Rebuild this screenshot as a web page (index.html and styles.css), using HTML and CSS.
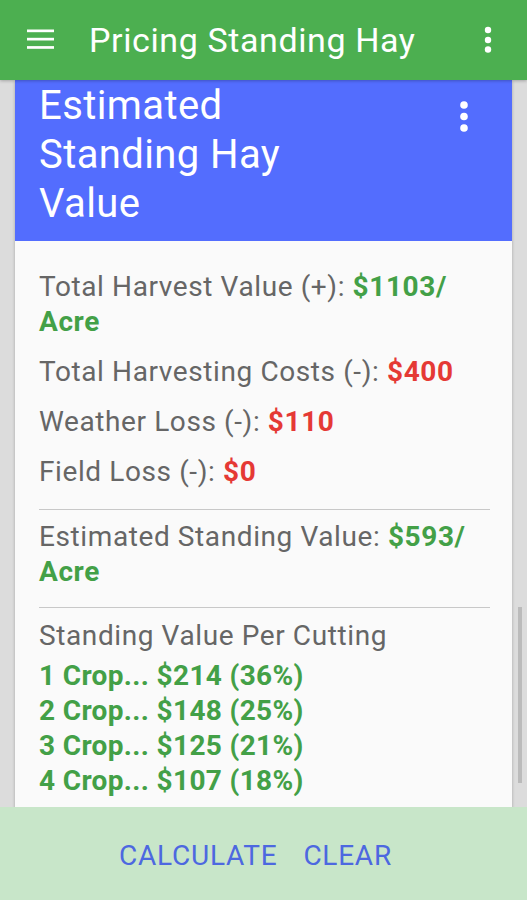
FILE: index.html
```html
<!DOCTYPE html>
<html>
<head>
    <title>Pricing Standing Hay</title>
    <link rel="stylesheet" href="styles.css">
</head>
<body>
    <div class="app">
        <div class="toolbar">
            <svg class="menu-icon" width="28" height="20" viewBox="0 0 28 20">
                <rect x="0" y="0.5" width="27" height="2.7" fill="#fff"/>
                <rect x="0" y="8.8" width="27" height="2.7" fill="#fff"/>
                <rect x="0" y="17.1" width="27" height="2.7" fill="#fff"/>
            </svg>
            <span class="toolbar-title">Pricing Standing Hay</span>
            <svg class="overflow-icon" width="12" height="30" viewBox="0 0 12 30">
                <circle cx="6" cy="5" r="3.2" fill="#fff"/>
                <circle cx="6" cy="15" r="3.2" fill="#fff"/>
                <circle cx="6" cy="24.5" r="3.2" fill="#fff"/>
            </svg>
        </div>

        <div class="content">
            <div class="card">
                <div class="card-header">
                    <h2 class="card-title">Estimated Standing Hay Value</h2>
                    <svg class="card-menu" width="14" height="34" viewBox="0 0 14 34">
                        <circle cx="7" cy="5" r="3.8" fill="#fff"/>
                        <circle cx="7" cy="16.5" r="3.8" fill="#fff"/>
                        <circle cx="7" cy="28" r="3.8" fill="#fff"/>
                    </svg>
                </div>
                <div class="card-body">
                    <div class="section first">
                        <p class="row">Total Harvest Value (+): <b class="plus">$1103/<br>Acre</b></p>
                        <p class="row">Total Harvesting Costs (-): <b class="minus">$400</b></p>
                        <p class="row">Weather Loss (-): <b class="minus">$110</b></p>
                        <p class="row">Field Loss (-): <b class="minus">$0</b></p>
                    </div>
                    <hr class="divider">
                    <div class="section second">
                        <p class="row">Estimated Standing Value: <b class="plus">$593/<br>Acre</b></p>
                    </div>
                    <hr class="divider">
                    <div class="section third">
                        <p class="row">Standing Value Per Cutting</p>
                        <ul class="cuttings">
                            <li>1 Crop... $214 (36%)</li>
                            <li>2 Crop... $148 (25%)</li>
                            <li>3 Crop... $125 (21%)</li>
                            <li>4 Crop... $107 (18%)</li>
                        </ul>
                    </div>
                </div>
            </div>
            <div class="scroll-thumb"></div>
        </div>

        <div class="actions">
            <button class="action">CALCULATE</button>
            <button class="action">CLEAR</button>
        </div>
    </div>
</body>
</html>
```

FILE: styles.css
```css
body {
    margin: 0;
    font-family: Roboto, "Noto Sans", sans-serif;
    background-color: #dcdcdc;
}

.app {
    width: 527px;
    height: 900px;
    display: flex;
    flex-direction: column;
    overflow: hidden;
}

/* Toolbar */
.toolbar {
    height: 80px;
    flex: none;
    background-color: #4caf50;
    display: flex;
    align-items: center;
    color: #fff;
    box-shadow: 0 1px 3px rgba(0, 0, 0, 0.25);
    position: relative;
    z-index: 2;
}

.menu-icon {
    margin-left: 27px;
    margin-bottom: 2px;
}

.toolbar-title {
    margin-left: 34px;
    font-size: 34px;
    letter-spacing: 0.6px;
    flex: 1;
}

.overflow-icon {
    margin-right: 33px;
}

/* Content */
.content {
    flex: 1;
    position: relative;
    overflow: hidden;
}

.card {
    margin: 0 15px 0 15px;
    width: 497px;
    background-color: #fafafa;
    box-shadow: 0 1px 3px rgba(0, 0, 0, 0.25);
}

.card-header {
    background-color: #536dfe;
    display: flex;
    justify-content: space-between;
    padding: 1px 0 13px 24px;
}

.card-title {
    margin: 0;
    max-width: 320px;
    font-size: 40px;
    font-weight: normal;
    letter-spacing: 0.4px;
    line-height: 49px;
    color: #fff;
}

.card-menu {
    margin: 19px 41px 0 0;
}

.card-body {
    padding: 0 22px 40px 24px;
}

.section {
    display: flex;
    flex-direction: column;
    gap: 15.5px;
}

.section.first {
    padding: 29px 0 20px;
}

.section.second {
    padding: 10px 0 18px;
}

.section.third {
    padding: 11px 0 0;
    gap: 4.5px;
}

.row {
    margin: 0;
    font-size: 28px;
    letter-spacing: 0.6px;
    line-height: 34.5px;
    color: #666;
}

.row b {
    font-weight: bold;
}

.plus {
    color: #43a047;
}

.minus {
    color: #e53935;
}

.divider {
    margin: 0;
    border: none;
    border-top: 1px solid #c8c8c8;
}

.cuttings {
    margin: 0;
    padding: 0;
    list-style: none;
}

.cuttings li {
    font-size: 28px;
    letter-spacing: 0.35px;
    line-height: 35px;
    font-weight: bold;
    color: #43a047;
}

.scroll-thumb {
    position: absolute;
    left: 518px;
    top: 527px;
    width: 4px;
    height: 176px;
    background-color: rgba(0, 0, 0, 0.15);
}

/* Bottom actions */
.actions {
    height: 93px;
    flex: none;
    background-color: #c8e6c9;
    display: flex;
    justify-content: center;
    align-items: center;
    gap: 2px;
    padding: 4px 16px 0 0;
    box-sizing: border-box;
}

.action {
    background: none;
    border: none;
    padding: 4px 12px;
    font-family: Roboto, "Noto Sans", sans-serif;
    font-size: 28px;
    letter-spacing: 0.75px;
    color: #4d68e0;
    cursor: pointer;
}
```
